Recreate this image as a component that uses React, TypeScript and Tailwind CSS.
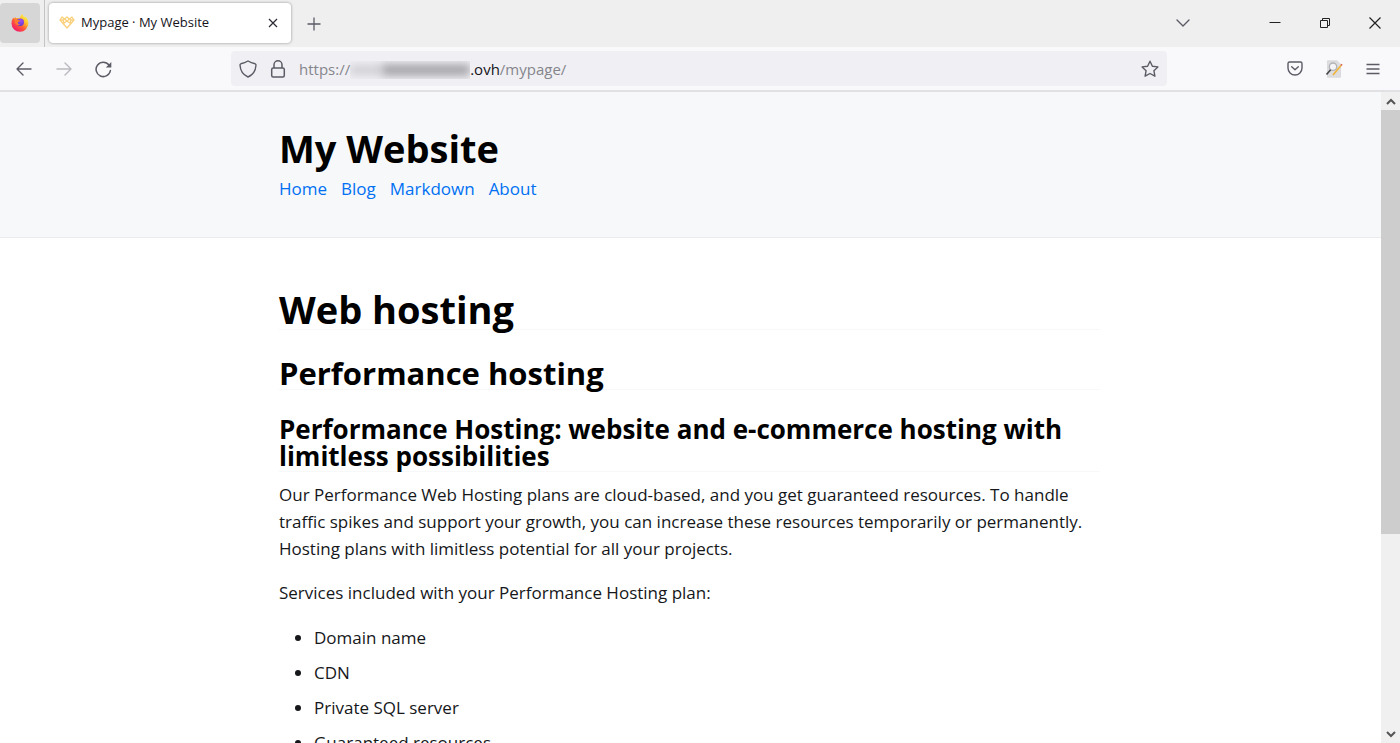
import type { ReactNode } from "react";

const navLinks = ["Home", "Blog", "Markdown", "About"];

const services = ["Domain name", "CDN", "Private SQL server", "Guaranteed resources"];

const IconButton = ({
  label,
  className = "",
  children,
}: {
  label: string;
  className?: string;
  children: ReactNode;
}) => (
  <button
    type="button"
    aria-label={label}
    className={`flex shrink-0 items-center justify-center text-[#5b5b66] ${className}`}
  >
    {children}
  </button>
);

const FirefoxLogo = () => (
  <svg width="18" height="18" viewBox="0 0 18 18">
    <defs>
      <linearGradient id="flame" x1="0.85" y1="0.1" x2="0.2" y2="0.95">
        <stop offset="0" stopColor="#fff04a" />
        <stop offset="0.3" stopColor="#ffc02b" />
        <stop offset="0.6" stopColor="#ff5a35" />
        <stop offset="1" stopColor="#f0136f" />
      </linearGradient>
      <radialGradient id="globe" cx="0.6" cy="0.3" r="0.8">
        <stop offset="0" stopColor="#a04cf0" />
        <stop offset="1" stopColor="#5a3bc8" />
      </radialGradient>
    </defs>
    <path
      d="M11.300 0c.5 1.600 1.400 2.600 2.400 3.600l.5-1c1.800 1.600 3.100 3.800 3.100 6.600A8.400 8.400 0 0 1 .5 9.600c0-2.300.7-4.400 1.900-6l.6 1.200 1.500-1.900.6 1.300c1-.4 2.600-.4 3.900.2C9 2.800 9.900 1.200 11.300 0z"
      fill="url(#flame)"
    />
    <circle cx="9.300" cy="8.300" r="3.700" fill="url(#globe)" />
    <path d="M3.600 6.400c1.400-.9 2.700-.8 4.200-.2l1.600.4c-.4 1-1.300 1.200-2.300 1.400-.7 1.100.4 2.400 2.200 2-1.200 1.300-3.400 1.300-4.600-.1-.7-.9-1.200-2.200-1.100-3.500z" fill="#ff7a30" />
  </svg>
);

const SiteIcon = () => (
  <svg width="16" height="13" viewBox="0 0 16 13" fill="none" stroke="#fad07a" strokeWidth="1.300" strokeLinejoin="round">
    <path d="M3 1 1 4l7 8 7-8-2-3-5 4z" />
    <path d="M1 4h3.500L8 1l3.500 3H15M4.500 4v3.500L8 5l3.500 2.500V4" />
  </svg>
);

const TabStrip = () => (
  <div className="flex h-[47px] shrink-0 items-center bg-[#efefef]">
    <button
      type="button"
      aria-label="Firefox View"
      className="mb-0.5 flex h-10 w-10 shrink-0 items-center justify-center rounded bg-[#d6d6d6]"
    >
      <FirefoxLogo />
    </button>
    <div className="ml-1 h-full w-px shrink-0 bg-[#c4c4c6]" />
    <div className="mb-0.5 ml-1 flex h-10 w-[242px] items-center rounded bg-white pr-3 pl-[10px] shadow-[0_0_3px_rgba(0,0,0,0.4)]">
      <SiteIcon />
      <span className="ml-[6px] flex-1 truncate text-[13px] text-[#15141a]">Mypage · My Website</span>
      <IconButton label="Close tab">
        <svg width="12" height="12" viewBox="0 0 12 12" fill="none" stroke="#2b2a33" strokeWidth="1.200">
          <path d="m2 2 8 8M10 2l-8 8" />
        </svg>
      </IconButton>
    </div>
    <IconButton label="New tab" className="ml-4 h-10">
      <svg width="14" height="14" viewBox="0 0 14 14" fill="none" stroke="currentColor" strokeWidth="1.300">
        <path d="M7 .5v13M.5 7h13" />
      </svg>
    </IconButton>
    <div className="flex-1" />
    <div className="mb-0.5 flex text-[#222]">
      <IconButton label="List all tabs" className="mr-[42px] h-10 w-[50px]">
        <svg width="14" height="8" viewBox="0 0 14 8" fill="none" stroke="currentColor" strokeWidth="1.400" strokeLinecap="round" strokeLinejoin="round">
          <path d="m1 1 6 6 6-6" />
        </svg>
      </IconButton>
      <button type="button" aria-label="Minimize" className="flex h-10 w-[50px] items-center justify-center">
        <svg width="12" height="12" viewBox="0 0 12 12" stroke="currentColor">
          <path d="M.5 5.500h11" />
        </svg>
      </button>
      <button type="button" aria-label="Restore" className="flex h-10 w-[50px] items-center justify-center">
        <svg width="12" height="12" viewBox="0 0 12 12" fill="none" stroke="currentColor">
          <path d="M1.500 3.500h7v7h-7z" />
          <path d="M3.500 3.500v-2h7v7h-2" />
        </svg>
      </button>
      <button type="button" aria-label="Close" className="flex h-10 w-[50px] items-center justify-center">
        <svg width="12" height="12" viewBox="0 0 12 12" stroke="currentColor" strokeWidth="1.200">
          <path d="m.5.5 11 11M11.500.5l-11 11" />
        </svg>
      </button>
    </div>
  </div>
);

const Toolbar = () => (
  <div className="flex h-[45px] shrink-0 items-center border-b-2 border-[#e1e1e5] bg-[#f9f9fb]">
    <div className="flex w-[231px] shrink-0 pl-1">
      <IconButton label="Back" className="h-8 w-10">
        <svg width="16" height="14" viewBox="0 0 16 14" fill="none" stroke="currentColor" strokeWidth="1.400" strokeLinecap="round" strokeLinejoin="round">
          <path d="M15 7H1M7 1 1 7l6 6" />
        </svg>
      </IconButton>
      <IconButton label="Forward" className="h-8 w-10 opacity-40">
        <svg width="16" height="14" viewBox="0 0 16 14" fill="none" stroke="currentColor" strokeWidth="1.400" strokeLinecap="round" strokeLinejoin="round">
          <path d="M1 7h14M9 1l6 6-6 6" />
        </svg>
      </IconButton>
      <IconButton label="Reload" className="h-8 w-10">
        <svg width="18" height="18" viewBox="0 0 18 18" fill="none" stroke="currentColor" strokeWidth="1.500" strokeLinecap="round">
          <path d="M14 5A7.200 7.200 0 1 0 15.400 10.500" />
          <path d="M16.300 2v5.500h-5.500z" fill="currentColor" stroke="none" />
        </svg>
      </IconButton>
    </div>
    <div className="flex h-[35px] flex-1 items-center rounded bg-[#f0f0f4] px-2">
      <IconButton label="Tracking protection">
        <svg width="18" height="18" viewBox="0 0 18 18" fill="none" stroke="currentColor" strokeWidth="1.400" strokeLinejoin="round">
          <path d="M9 1C7 2.200 4 3.300 1.800 3.800 1.200 4 1 4.300 1 5c.3 6 3.500 10 8 12 4.500-2 7.700-6 8-12 0-.7-.2-1-.8-1.200C14 3.300 11 2.200 9 1z" />
        </svg>
      </IconButton>
      <IconButton label="Site information" className="ml-3">
        <svg width="18" height="18" viewBox="0 0 18 18" fill="none" stroke="currentColor" strokeWidth="1.500">
          <rect x="2.700" y="8" width="12.600" height="9" rx="1.500" />
          <path d="M5 8V4.800a4 4 0 0 1 8 0V8" />
        </svg>
      </IconButton>
      <div className="ml-3 flex flex-1 items-center pt-0.5 text-[15px] text-[#85858c]">
        <span>https://</span>
        <span className="flex h-[18px] w-[120px] items-center overflow-hidden">
          <span className="h-[10px] w-8 bg-[#cfcfd4] blur-[4px]" />
          <span className="h-3 flex-1 bg-[#a6a6ab] blur-[4px]" />
        </span>
        <span className="text-[#15141a]">.ovh</span>
        <span>/mypage/</span>
      </div>
      <IconButton label="Bookmark this page">
        <svg width="18" height="18" viewBox="0 0 18 18" fill="none" stroke="currentColor" strokeWidth="1.400" strokeLinejoin="round">
          <path d="m9 1.200 2.400 5 5.500.7-4 3.800 1 5.500L9 13.500l-4.900 2.700 1-5.500-4-3.800 5.500-.7z" />
        </svg>
      </IconButton>
    </div>
    <div className="flex w-[233px] shrink-0 justify-end pr-2">
      <IconButton label="Save to Pocket" className="h-8 w-[38px]">
        <svg width="16" height="15" viewBox="0 0 16 15" fill="none" stroke="currentColor" strokeWidth="1.400" strokeLinecap="round" strokeLinejoin="round">
          <path d="M2.500 1h11A1.500 1.500 0 0 1 15 2.500V7A7 7 0 0 1 1 7V2.500A1.500 1.500 0 0 1 2.500 1z" />
          <path d="M4.700 5.700 8 8.800l3.300-3.100" />
        </svg>
      </IconButton>
      <IconButton label="Inspector" className="h-8 w-10">
        <svg width="18" height="18" viewBox="0 0 18 18" fill="none">
          <path d="M2.500.8h9.500l3.500 3.400v13h-13z" fill="#dedee0" stroke="#cfcfd1" strokeWidth=".6" />
          <circle cx="8" cy="6.700" r="3.700" fill="#f4f4f6" stroke="#b2b2b6" strokeWidth="1.300" />
          <path d="m5.600 9.700-4.100 4.800" stroke="#4a4a4a" strokeWidth="1.700" />
          <path d="m16 5.500-8 9.500" stroke="#f0b43a" strokeWidth="1.700" />
          <path d="m16 5.500 1-1.200" stroke="#e0604a" strokeWidth="1.700" />
        </svg>
      </IconButton>
      <IconButton label="Open application menu" className="h-8 w-[38px]">
        <svg width="14" height="12" viewBox="0 0 14 12" stroke="currentColor" strokeWidth="1.300">
          <path d="M.5 1.500h13M.5 6h13M.5 10.500h13" />
        </svg>
      </IconButton>
    </div>
  </div>
);

const Scrollbar = () => (
  <div className="flex w-[19px] shrink-0 flex-col bg-[#f0f0f0] text-[#555]">
    <button type="button" aria-label="Scroll up" className="flex h-[18px] items-center justify-center">
      <svg width="10" height="7" viewBox="0 0 10 7" fill="none" stroke="currentColor" strokeWidth="2">
        <path d="m1 6 4-4 4 4" />
      </svg>
    </button>
    <div className="flex flex-1 flex-col">
      <div className="h-[69%] bg-[#cdcdcd]" />
    </div>
    <button type="button" aria-label="Scroll down" className="flex h-[18px] items-center justify-center">
      <svg width="10" height="7" viewBox="0 0 10 7" fill="none" stroke="currentColor" strokeWidth="2">
        <path d="m1 1 4 4 4-4" />
      </svg>
    </button>
  </div>
);

const Page = () => (
  <div className="flex-1 overflow-hidden bg-white text-[17px] leading-[27px] text-[#15171a]">
    <header className="border-b border-[#e9ebee] bg-[#f6f8fa] pt-[35px] pr-0.5 pb-[35px]">
      <div className="mx-auto max-w-[821px]">
        <p className="text-[38px] leading-[42px] font-bold text-black">My Website</p>
        <nav className="mt-[6px] flex gap-[14px]">
          {navLinks.map((link) => (
            <a key={link} href="#" className="text-[#0070f3]">
              {link}
            </a>
          ))}
        </nav>
      </div>
    </header>
    <main className="pt-[52px] pr-0.5">
      <div className="mx-auto max-w-[821px]">
        <h1 className="border-b border-[#f6f8fa] pb-px text-[38px] leading-[38px] font-bold text-black">
          Web hosting
        </h1>
        <h2 className="mt-[27px] border-b border-[#f6f8fa] text-[31px] leading-[32px] font-bold text-black">
          Performance hosting
        </h2>
        <h3 className="mt-[26px] border-b border-[#f6f8fa] pb-px text-[26px] leading-[27px] font-bold text-black">
          Performance Hosting: website and e-commerce hosting with limitless possibilities
        </h3>
        <p className="mt-[9px]">
          Our Performance Web Hosting plans are cloud-based, and you get guaranteed resources. To handle traffic spikes
          and support your growth, you can increase these resources temporarily or permanently. Hosting plans with
          limitless potential for all your projects.
        </p>
        <p className="mt-[17px]">Services included with your Performance Hosting plan:</p>
        <ul className="mt-[18px] flex list-disc flex-col gap-2 pl-[35px]">
          {services.map((service) => (
            <li key={service}>{service}</li>
          ))}
        </ul>
      </div>
    </main>
  </div>
);

const App = () => {
  return (
    <div className="flex h-screen flex-col overflow-hidden font-['Open_Sans','Noto_Sans',sans-serif]">
      <TabStrip />
      <Toolbar />
      <div className="flex min-h-0 flex-1">
        <Page />
        <Scrollbar />
      </div>
    </div>
  );
};

export default App;
